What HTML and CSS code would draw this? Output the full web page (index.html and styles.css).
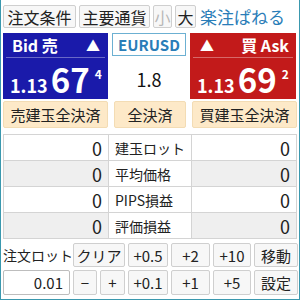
FILE: index.html
```html
<!DOCTYPE html>
<html lang="ja">
<head>
    <meta charset="UTF-8">
    <title>楽注ぱねる</title>
    <link rel="stylesheet" href="styles.css">
</head>
<body>
    <div class="panel">
        <div class="toolbar">
            <button class="btn w-order">注文条件</button>
            <button class="btn w-major">主要通貨</button>
            <button class="btn w-small" disabled>小</button>
            <button class="btn w-large">大</button>
            <span class="brand">楽注ぱねる</span>
        </div>

        <div class="quotes">
            <div class="quote bid">
                <div class="quote-head">
                    <span>Bid 売</span>
                    <span class="tri">▲</span>
                </div>
                <div class="price">
                    <span class="pre">1.13</span><span class="big">67</span><span class="pip">4</span>
                </div>
            </div>
            <div class="middle">
                <div class="symbol">EURUSD</div>
                <div class="spread">1.8</div>
            </div>
            <div class="quote ask">
                <div class="quote-head">
                    <span class="tri">▲</span>
                    <span>買 Ask</span>
                </div>
                <div class="price">
                    <span class="pre">1.13</span><span class="big">69</span><span class="pip">2</span>
                </div>
            </div>
        </div>

        <div class="closers">
            <button class="btn close">売建玉全決済</button>
            <button class="btn close">全決済</button>
            <button class="btn close">買建玉全決済</button>
        </div>

        <table class="positions">
            <tr><td class="num">0</td><td class="label">建玉ロット</td><td class="num">0</td></tr>
            <tr class="alt"><td class="num">0</td><td class="label">平均価格</td><td class="num">0</td></tr>
            <tr><td class="num">0</td><td class="label">PIPS損益</td><td class="num">0</td></tr>
            <tr class="alt"><td class="num">0</td><td class="label">評価損益</td><td class="num">0</td></tr>
        </table>

        <div class="lots">
            <span class="lot-label">注文ロット</span>
            <button class="btn span2">クリア</button>
            <button class="btn">+0.5</button>
            <button class="btn">+2</button>
            <button class="btn">+10</button>
            <button class="btn">移動</button>

            <input class="lot-input" type="text" value="0.01">
            <button class="btn">−</button>
            <button class="btn">+</button>
            <button class="btn">+0.1</button>
            <button class="btn">+1</button>
            <button class="btn">+5</button>
            <button class="btn">設定</button>
        </div>
    </div>
</body>
</html>
```

FILE: styles.css
```css
* {
    box-sizing: border-box;
}
body {
    margin: 0;
    font-family: "Noto Sans CJK JP", sans-serif;
    color: #222;
    background-color: #fff;
}
.panel {
    width: 300px;
    height: 300px;
    padding: 5px 2px 0 2px;
    border: 1px solid #3a98ae;
    border-top: none;
}
.btn {
    font-family: inherit;
    font-size: 15px;
    line-height: 1;
    color: #222;
    background-color: #f7f7f7;
    border: 1px solid #cfcfcf;
    border-radius: 2px;
    padding: 0;
    margin: 0;
    white-space: nowrap;
}
.btn:disabled {
    color: #b8b8b8;
}

/* top row */
.toolbar {
    display: flex;
    align-items: center;
    height: 23px;
    gap: 3px;
}
.toolbar .btn {
    height: 23px;
    font-size: 16px;
}
.w-order { width: 73px; }
.w-major { width: 71px; }
.w-small { width: 19px; }
.w-large { width: 21px; }
.brand {
    margin-left: 1px;
    font-size: 17px;
    color: #2a7db8;
    white-space: nowrap;
}

/* quotes */
.quotes {
    display: grid;
    grid-template-columns: 105px 74px 106px;
    column-gap: 4px;
    margin-top: 5px;
    height: 63px;
}
.quote {
    color: #fff;
    display: flex;
    flex-direction: column;
    padding: 0 3px;
}
.bid {
    background-color: #1a1aaa;
}
.ask {
    background-color: #c21a1a;
}
.quote-head {
    display: flex;
    justify-content: space-between;
    align-items: center;
    height: 25px;
    font-size: 16px;
    line-height: 1;
    font-weight: bold;
    border-bottom: 1px solid rgba(255, 255, 255, 0.35);
    padding: 0 5px 0 6px;
}
.ask .quote-head {
    padding: 0 4px 0 7px;
}
.tri {
    font-size: 14px;
}
.price {
    display: flex;
    align-items: baseline;
    font-weight: bold;
    line-height: 28px;
    padding-left: 4px;
    margin-top: 7px;
}
.pre {
    font-size: 18px;
}
.big {
    font-size: 33px;
    margin-left: 3px;
}
.pip {
    font-size: 12px;
    line-height: 12px;
    margin-left: 5px;
    align-self: flex-start;
    margin-top: 3px;
}
.middle {
    display: flex;
    flex-direction: column;
    align-items: center;
}
.symbol {
    width: 100%;
    height: 23px;
    border: 1px solid #6cb0d2;
    color: #2a7db8;
    font-weight: bold;
    font-size: 15px;
    line-height: 21px;
    text-align: center;
}
.spread {
    margin-top: 14px;
    font-size: 18px;
    line-height: 1;
    color: #111;
}

/* close buttons */
.closers {
    display: flex;
    justify-content: space-between;
    margin-top: 5px;
}
.btn.close {
    height: 27px;
    width: 105px;
    background-color: #fde9c8;
    border-color: #f3dcb4;
}
.closers .btn.close:nth-child(2) {
    width: 72px;
}

/* position table */
.positions {
    width: 294px;
    border-collapse: collapse;
    margin-top: 6px;
    font-size: 14px;
}
.positions td {
    border: 1px solid #d4d4d4;
    height: 26px;
    padding: 0 6px;
    line-height: 1;
    white-space: nowrap;
}
.positions td:nth-child(1),
.positions td:nth-child(3) {
    width: 106px;
}
.positions .num {
    text-align: right;
    font-size: 18px;
}
.positions .label {
    padding-left: 6px;
}
.positions .alt td {
    background-color: #efefef;
}
.positions .alt td.label {
    background-color: #fff;
}

/* lot buttons */
.lots {
    display: grid;
    grid-template-columns: 67px 24px 25px 40px 39px 38px 44px;
    grid-template-rows: 24px 25px;
    gap: 3px;
    margin-top: 4px;
}
.lots .btn {
    height: 100%;
}
.span2 {
    grid-column: span 2;
}
.lot-label {
    font-size: 14px;
    line-height: 24px;
    white-space: nowrap;
}
.lot-input {
    font-family: inherit;
    font-size: 15px;
    text-align: right;
    border: 1px solid #bdbdbd;
    border-radius: 2px;
    padding: 0 6px;
    width: 100%;
    color: #222;
}
```
